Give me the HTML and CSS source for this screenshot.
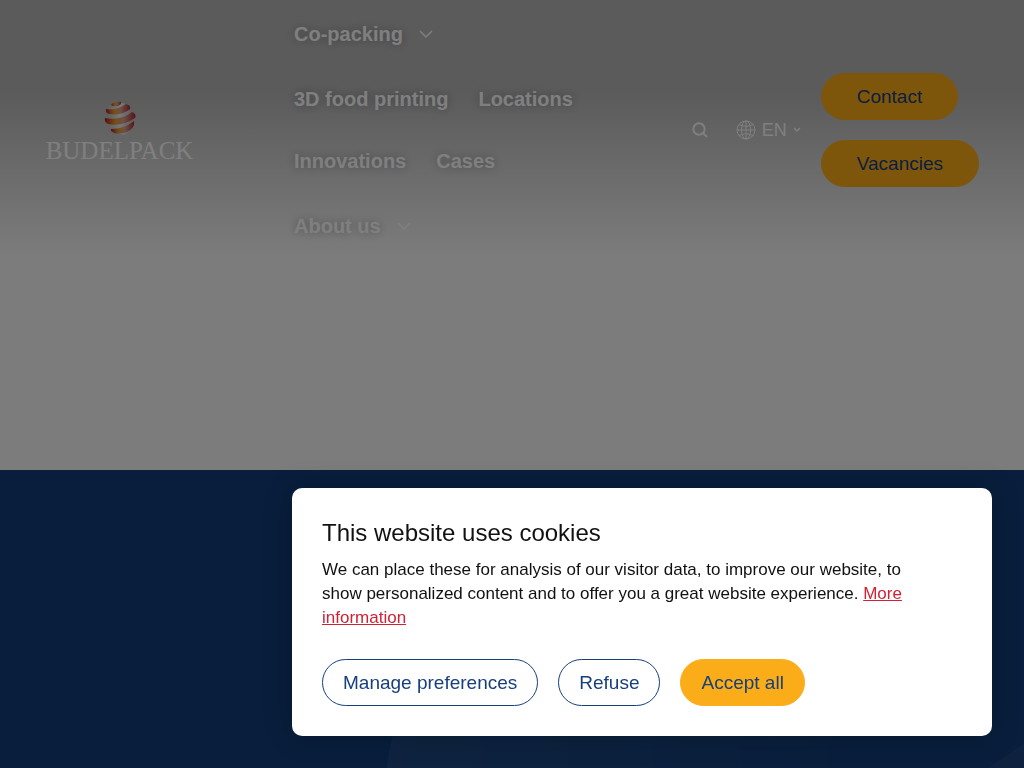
FILE: index.html
```html
<!DOCTYPE html>
<html lang="en">
<head>
  <meta charset="UTF-8">
  <meta name="viewport" content="width=device-width, initial-scale=1.0">
  <title>Budelpack</title>
  <link rel="stylesheet" href="styles.css">
</head>
<body>
  <div class="hero">
    <header class="header">
      <a href="#" class="logo">
        <svg class="logo-mark" viewBox="0 0 32 36" aria-hidden="true">
          <defs>
            <linearGradient id="band" x1="0" y1="0" x2="1" y2="0">
              <stop offset="0" stop-color="#a8202a"/>
              <stop offset="0.35" stop-color="#e8a030"/>
              <stop offset="0.6" stop-color="#dda08c"/>
              <stop offset="1" stop-color="#b02a32"/>
            </linearGradient>
            <linearGradient id="shine" x1="0" y1="0" x2="1" y2="0">
              <stop offset="0" stop-color="#bbb"/>
              <stop offset="0.5" stop-color="#eee"/>
              <stop offset="1" stop-color="#bbb"/>
            </linearGradient>
          </defs>
          <path fill="url(#shine)" d="M4 6 Q8 2 13 4 Q18 0 21 3 L25 9 L28 13 L29 19 L28 24 Q25 35 19 34 L8 29 L4 22 L3 14z"/>
          <path fill="url(#band)" d="M7 4 Q10 0 17 1 Q18 3 14 5 Q9 6 7 4z"/>
          <path fill="url(#band)" d="M2 8 Q13 10 22 3 Q27 4 26 8 Q18 15 5 13 Q1 12 2 8z"/>
          <path fill="url(#band)" d="M1 17 Q17 20 28 11 Q33 13 31 17 Q18 26 4 23 Q0 21 1 17z"/>
          <path fill="url(#band)" d="M7 28 Q20 28 30 20 Q31 26 26 29 Q19 34 10 32 Q6 30 7 28z"/>
        </svg>
        <span class="logo-text">BUDELPACK</span>
      </a>

      <nav class="nav">
        <a href="#" class="nav-link has-sub">Co-packing
          <svg class="arrow" viewBox="0 0 14 9" aria-hidden="true"><path d="M1 1l6 6 6-6"/></svg>
        </a>
        <a href="#" class="nav-link">3D food printing</a>
        <a href="#" class="nav-link">Locations</a>
        <a href="#" class="nav-link">Innovations</a>
        <a href="#" class="nav-link">Cases</a>
        <a href="#" class="nav-link has-sub">About us
          <svg class="arrow" viewBox="0 0 14 9" aria-hidden="true"><path d="M1 1l6 6 6-6"/></svg>
        </a>
      </nav>

      <div class="tools">
        <button type="button" class="search" aria-label="Search">
          <svg viewBox="0 0 16 16" aria-hidden="true"><circle cx="7" cy="7" r="5.700"/><path d="M11 11l4 4"/></svg>
        </button>
        <button type="button" class="language">
          <svg class="globe" viewBox="0 0 20 20" aria-hidden="true">
            <circle cx="10" cy="10" r="9"/>
            <ellipse cx="10" cy="10" rx="4.500" ry="9"/>
            <path d="M10 1v18M1 10h18M3 4.500Q10 8 17 4.500M3 15.500Q10 12 17 15.500"/>
          </svg>
          <span>EN</span>
          <svg class="caret" viewBox="0 0 8 6" aria-hidden="true"><path d="M1 1l3 3 3-3" stroke-width="1.400"/></svg>
        </button>
        <div class="cta">
          <a href="#" class="btn btn-wide">Contact</a>
          <a href="#" class="btn btn-wide">Vacancies</a>
        </div>
      </div>
    </header>
  </div>

  <section class="intro">
    <svg class="shapes" viewBox="0 0 1024 298" preserveAspectRatio="xMidYMin slice" aria-hidden="true">
      <defs>
        <linearGradient id="fade" x1="0" y1="0" x2="1" y2="0">
          <stop offset="0" stop-color="#fff" stop-opacity="0.06"/>
          <stop offset="0.8" stop-color="#fff" stop-opacity="0"/>
        </linearGradient>
      </defs>
      <circle fill="url(#fade)" cx="704" cy="340" r="320"/>
      <path fill="#fff" fill-opacity="0.05" d="M988 298L1024 274V298z"/>
    </svg>
  </section>

  <div class="overlay"></div>

  <div class="cookie" role="dialog" aria-labelledby="cookieTitle">
    <h2 id="cookieTitle">This website uses cookies</h2>
    <p>We can place these for analysis of our visitor data, to improve our website, to show personalized content and to offer you a great website experience. <a href="#">More information</a></p>
    <div class="cookie-buttons">
      <button type="button" class="btn btn-outline">Manage preferences</button>
      <button type="button" class="btn btn-outline">Refuse</button>
      <button type="button" class="btn">Accept all</button>
    </div>
  </div>
</body>
</html>
```
FILE: styles.css
```css
:root {
  --blue: #163f7c;
  --navy: #103c78;
  --orange: #faad18;
  --red: #d02236;
}

* {
  box-sizing: border-box;
}

body {
  display: flex;
  flex-direction: column;
  min-height: 100vh;
  margin: 0;
  font-family: "Liberation Sans", Arial, sans-serif;
  font-size: 17px;
  line-height: 24px;
  color: #111;
}

.hero {
  min-height: 470px;
  background: #f8f8fb;
}

.header {
  display: flex;
  align-items: center;
  padding: 0 45px;
  background: linear-gradient(#b7b7b7 0%, #b7b7b7 36%, #f8f8fb 98%);
}

.logo {
  display: flex;
  flex-direction: column;
  align-items: center;
  width: 149px;
  margin-right: 100px;
  padding-top: 5px;
  color: #fff;
  text-decoration: none;
}

.logo-mark {
  width: 32px;
  height: 36px;
}

.logo-text {
  font-family: "Liberation Serif", serif;
  font-size: 25px;
  line-height: 28px;
}

.nav {
  display: flex;
  flex-wrap: wrap;
  flex: 0 1 310px;
  column-gap: 30px;
}

.nav-link {
  display: flex;
  align-items: center;
  height: 62px;
  color: #fff;
  font-size: 20px;
  font-weight: bold;
  text-decoration: none;
  text-shadow: 0 0 10px rgba(0, 0, 0, 0.3);
}

.has-sub {
  height: 68px;
}

svg {
  fill: none;
  stroke: #fff;
}

.logo-mark,
.shapes {
  stroke: none;
}

.arrow {
  width: 14px;
  height: 9px;
  margin-left: 16px;
  stroke-width: 1.5;
}

.tools {
  display: flex;
  align-items: center;
  margin-left: auto;
}

.search,
.language {
  display: flex;
  align-items: center;
  padding: 0;
  border: none;
  background: none;
  color: #fff;
  font-family: inherit;
  font-size: 18px;
  cursor: pointer;
}

.search {
  margin-right: 28px;
}

.search svg {
  width: 16px;
  height: 16px;
  stroke-width: 2;
}

.language {
  gap: 6px;
  margin-right: 20px;
}

.globe {
  width: 20px;
  height: 20px;
}

.caret {
  width: 8px;
  height: 6px;
}

.cta {
  display: flex;
  flex-direction: column;
  align-items: flex-start;
  gap: 20px;
}

.btn {
  padding: 0 20px;
  border: 1px solid var(--orange);
  border-radius: 24px;
  background: var(--orange);
  color: var(--blue);
  font-family: inherit;
  font-size: 19px;
  line-height: 45px;
  text-decoration: none;
  cursor: pointer;
}

.btn-wide {
  padding: 0 35px;
}

.btn-outline {
  border-color: var(--blue);
  background: #fff;
}

.intro {
  position: relative;
  flex: 1;
  background: var(--navy);
}

.shapes {
  position: absolute;
  width: 100%;
  height: 100%;
}

.overlay {
  position: fixed;
  inset: 0;
  background: rgba(0, 0, 0, 0.5);
}

.cookie {
  position: fixed;
  right: 32px;
  bottom: 32px;
  width: 700px;
  max-width: calc(100% - 64px);
  padding: 30px;
  border-radius: 10px;
  background: #fff;
  box-shadow: 0 0 30px rgba(0, 0, 0, 0.2);
}

.cookie h2 {
  margin: 0 0 10px;
  font-size: 24px;
  font-weight: normal;
  line-height: 30px;
}

.cookie p {
  max-width: 600px;
  margin: 0 0 29px;
}

.cookie p a {
  color: var(--red);
}

.cookie-buttons {
  display: flex;
  flex-wrap: wrap;
  gap: 20px;
}
```
